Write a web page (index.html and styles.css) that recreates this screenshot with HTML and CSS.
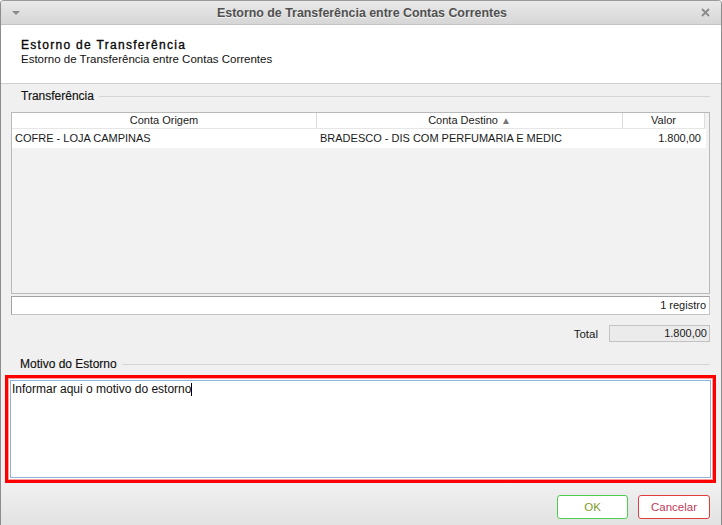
FILE: index.html
```html
<!DOCTYPE html>
<html lang="pt-BR">
 <head>
  <meta charset="utf-8">
  <title>Estorno de Transferência entre Contas Correntes</title>
  <link rel="stylesheet" href="styles.css">
 </head>
 <body>
  <div class="window">
   <div class="titlebar">
    <span class="menuArrow"></span>
    <span class="title">Estorno de Transferência entre Contas Correntes</span>
    <span class="closeBtn">
     <svg width="9" height="9" viewBox="0 0 9 9">
      <path d="M1 1 L8 8 M8 1 L1 8" stroke="#8a8a8a" stroke-width="1.8"/>
     </svg>
    </span>
   </div>

   <div class="header">
    <div class="headerTitle">Estorno de Transferência</div>
    <div class="headerSub">Estorno de Transferência entre Contas Correntes</div>
   </div>

   <div class="content">
    <div class="groupLabel transfLabel">
     <span>Transferência</span>
    </div>

    <div class="grid">
     <div class="gridHead">
      <div class="col colOrigem">Conta Origem</div>
      <div class="col colDestino">Conta Destino <span class="sortArrow">&#9650;</span></div>
      <div class="col colValor">Valor</div>
     </div>
     <div class="gridRow">
      <div class="col colOrigem">COFRE - LOJA CAMPINAS</div>
      <div class="col colDestino">BRADESCO - DIS COM PERFUMARIA E MEDIC</div>
      <div class="col colValor">1.800,00</div>
     </div>
    </div>

    <div class="gridFooter">1 registro</div>

    <div class="totalRow">
     <span class="totalLabel">Total</span>
     <div class="totalBox">1.800,00</div>
    </div>

    <div class="groupLabel motivoLabel">
     <span>Motivo do Estorno</span>
    </div>

    <div class="motivoFrame">
     <div class="motivoText">Informar aqui o motivo do estorno<span class="caret"></span></div>
    </div>
   </div>

   <div class="actions">
    <button class="btn btnOk">OK</button>
    <button class="btn btnCancel">Cancelar</button>
   </div>
  </div>
 </body>
</html>
```

FILE: styles.css
```css
    html, body {
	margin: 0px;
	padding: 0px;
	background-color: #ffffff;
    }

    body {
	font-family: "Liberation Sans", Arial, sans-serif;
	font-size: 11px;
	color: #1a1a1a;
    }

    div.window {
	width: 720px;
	height: 524px;
	border: 1px solid #8c8c8c;
	border-top-color: #9a9a9a;
	border-radius: 4px 4px 0px 0px;
	display: flex;
	flex-direction: column;
	background-color: #f0f0f0;
	overflow: hidden;
    }

    div.titlebar {
	height: 23px;
	flex: none;
	display: flex;
	align-items: center;
	background: linear-gradient(#e9e9e9, #d6d6d6);
	border-bottom: 1px solid #c4c4c4;
    }

    span.menuArrow {
	width: 0px;
	height: 0px;
	margin-left: 11px;
	margin-top: 1px;
	border-left: 4px solid transparent;
	border-right: 4px solid transparent;
	border-top: 4px solid #8a8a8a;
    }

    span.title {
	flex: 1;
	text-align: center;
	font-weight: bold;
	font-size: 12.4px;
	color: #505050;
	text-shadow: 0px 1px 0px #f4f4f4;
	margin-left: 3px;
    }

    span.closeBtn {
	width: 9px;
	height: 9px;
	margin-right: 11px;
	display: flex;
    }

    div.header {
	flex: none;
	height: 59px;
	background-color: #ffffff;
	border-bottom: 1px solid #cfcfcf;
	padding-left: 20px;
	box-sizing: border-box;
	padding-top: 13px;
	font-size: 11.5px;
	line-height: 14px;
	color: #111111;
    }

    div.headerTitle {
	font-size: 12px;
	letter-spacing: 1.3px;
	-webkit-text-stroke: 0.35px #111111;
	color: #000000;
    }

    div.content {
	flex: none;
	display: flex;
	flex-direction: column;
    }

    div.groupLabel {
	display: flex;
	align-items: center;
	gap: 5px;
	margin-left: 19px;
	margin-right: 11px;
	font-size: 12px;
	color: #111111;
	-webkit-text-stroke: 0.15px #111111;
	height: 14px;
    }

    div.groupLabel::after {
	content: "";
	flex: 1;
	border-top: 1px solid #d4d4d4;
    }

    div.transfLabel {
	margin-top: 5px;
	margin-left: 20px;
    }

    div.grid {
	margin: 9px 11px 0px 10px;
	height: 180px;
	border: 1px solid #b9b9b9;
	background-color: #f2f2f2;
    }

    div.gridHead {
	display: flex;
	height: 15px;
	line-height: 15px;
	background-color: #ffffff;
	border-bottom: 1px solid #e6e6e6;
	margin-right: 4px;
    }

    div.gridHead div.col {
	text-align: center;
	border-right: 1px solid #dcdcdc;
	color: #222222;
    }

    div.gridRow {
	display: flex;
	height: 19px;
	line-height: 19px;
	background-color: #ffffff;
	margin-right: 3px;
    }

    div.gridRow div.col {
	padding-left: 3px;
	white-space: nowrap;
	overflow: hidden;
    }

    div.col {
	box-sizing: border-box;
    }

    div.colOrigem {
	width: 305px;
    }

    div.colDestino {
	width: 306px;
    }

    div.colValor {
	width: 82px;
    }

    div.gridRow div.colValor {
	text-align: right;
	padding-right: 4px;
    }

    span.sortArrow {
	font-size: 10px;
	color: #777777;
	vertical-align: 0px;
    }

    div.gridFooter {
	margin: 2px 11px 0px 10px;
	height: 17px;
	line-height: 17px;
	background-color: #ffffff;
	border: 1px solid #c4c4c4;
	border-top-color: #a2a2a2;
	border-left-color: #a2a2a2;
	text-align: right;
	padding-right: 3px;
    }

    div.totalRow {
	display: flex;
	justify-content: flex-end;
	align-items: center;
	margin: 10px 11px 0px 0px;
	gap: 11px;
    }

    span.totalLabel {
	font-size: 11.5px;
    }

    div.totalBox {
	width: 101px;
	height: 17px;
	line-height: 15px;
	box-sizing: border-box;
	border: 1px solid #c2c2c2;
	background-color: #ebebeb;
	text-align: right;
	padding-right: 2px;
    }

    div.motivoLabel {
	margin-top: 15px;
	margin-left: 19px;
    }

    div.motivoFrame {
	margin: 4px 5px 0px 4px;
	height: 108px;
	box-sizing: border-box;
	border: 3px solid #ff0000;
	box-shadow: inset 0px 0px 0px 1px #ff9c9c;
	padding: 2px;
	background-color: #ffffff;
    }

    div.motivoText {
	height: 100%;
	box-sizing: border-box;
	border: 1px solid #8fb2da;
	padding: 1px 1px;
	font-size: 12px;
	line-height: 14px;
	color: #111111;
    }

    span.caret {
	display: inline-block;
	width: 1px;
	height: 13px;
	background-color: #000000;
	vertical-align: -3px;
    }

    div.actions {
	flex: 1;
	display: flex;
	justify-content: flex-end;
	align-items: flex-start;
	gap: 10px;
	padding: 12px 11px 0px 0px;
	background: linear-gradient(#f1f1f1, #e2e2e2);
    }

    button.btn {
	width: 71px;
	height: 24px;
	background-color: #ffffff;
	border-radius: 3px;
	font-family: "Liberation Sans", Arial, sans-serif;
	font-size: 11.5px;
	padding: 0px;
    }

    button.btnOk {
	border: 1px solid #4fcc4f;
	color: #7f9b2a;
    }

    button.btnCancel {
	width: 72px;
	border: 1px solid #e23c3c;
	color: #c03c58;
    }
```
